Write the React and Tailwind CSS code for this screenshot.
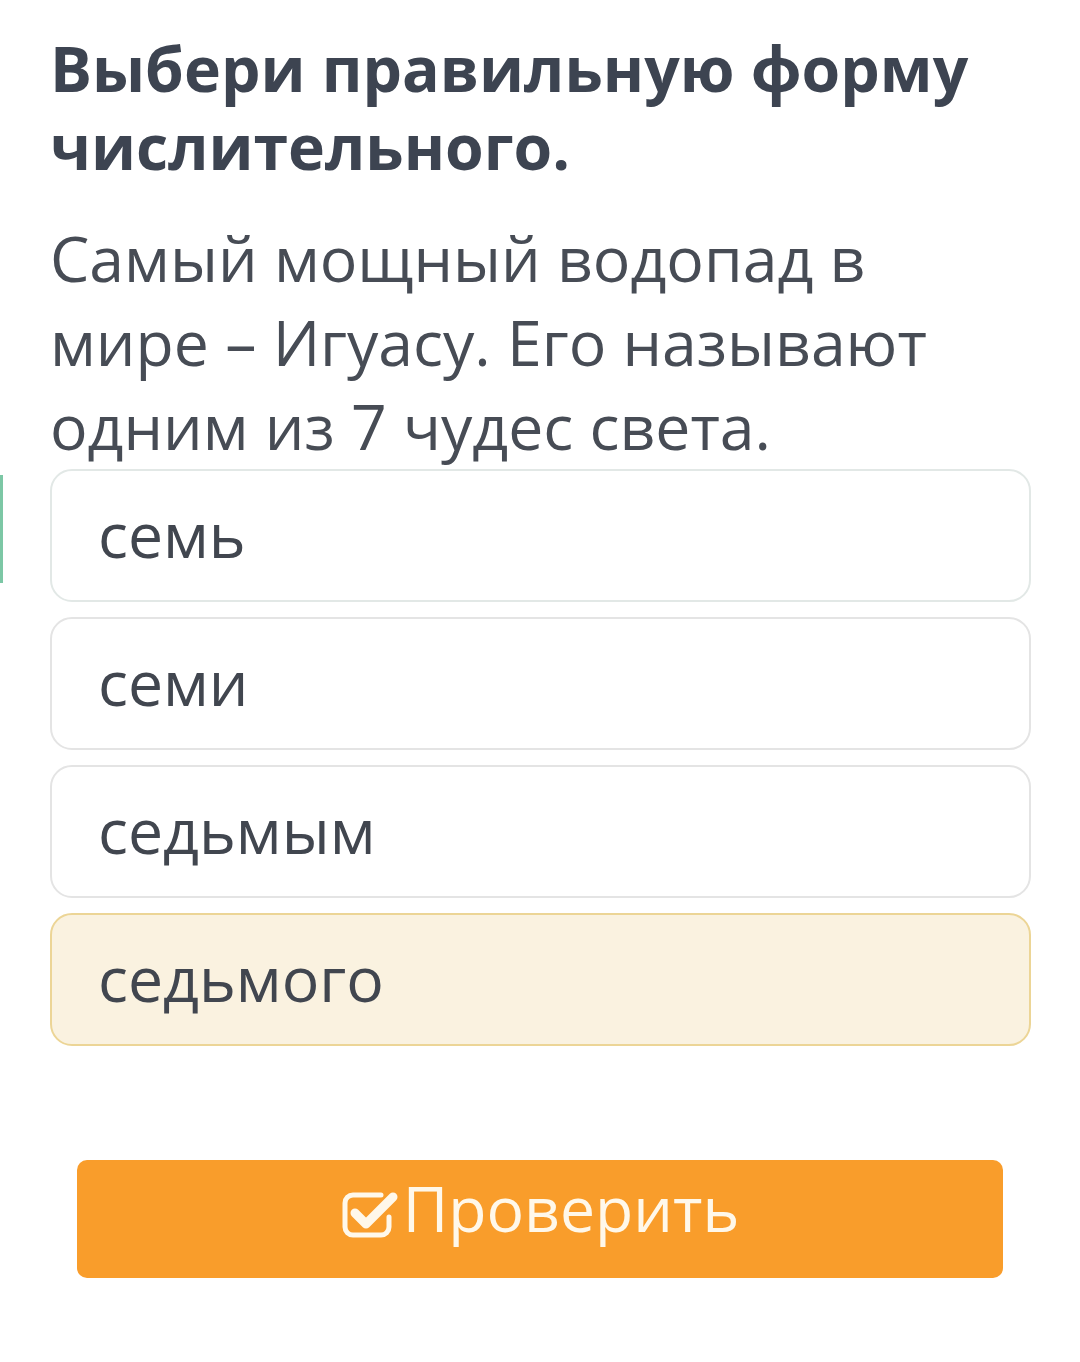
import { useState } from 'react';

const options = ['семь', 'семи', 'седьмым', 'седьмого'];

const CheckIcon = () => (
  <svg width="58" height="52" viewBox="0 0 58 52" fill="none" className="mr-[4px] shrink-0">
    <path
      d="M40 6 H12 a8 8 0 0 0 -8 8 V38 a8 8 0 0 0 8 8 H40 a8 8 0 0 0 8 -8 V28"
      stroke="#fff8ea"
      strokeWidth="5"
      strokeLinecap="round"
    />
    <path d="M14 24 L25 35 L52 8" stroke="#fff8ea" strokeWidth="9" strokeLinecap="round" strokeLinejoin="round" />
  </svg>
);

export default function App() {
  const [selected, setSelected] = useState(3);

  return (
    <div
      className="relative min-h-[1362px] w-[1080px] bg-white"
      style={{ fontFamily: '"Open Sans", "Noto Sans", sans-serif' }}
    >
      <div className="absolute left-0 top-[475px] h-[108px] w-[3px] bg-[#7cc7a5]" />

      <div className="px-[50px] pt-[29px]">
        <h1 className="text-[62.5px] font-bold leading-[78px] text-[#3d4451]">
          Выбери правильную форму числительного.
        </h1>
        <p className="mt-[31px] text-[62.5px] leading-[84px] text-[#474c55]">
          Самый мощный водопад в<br />
          мире – Игуасу. Его называют<br />
          одним из 7 чудес света.
        </p>

        <div className="mt-[1px] flex flex-col gap-[15px]">
          {options.map((opt, i) => (
            <button
              key={opt}
              onClick={() => setSelected(i)}
              className={
                'flex h-[133px] w-[981px] items-center rounded-[22px] border-2 pb-[4px] pl-[46px] text-left text-[62.5px] text-[#41464f] ' +
                (selected === i
                  ? 'border-[#ecd596] bg-[#faf2e0]'
                  : i === 0
                  ? 'border-[#e2e8e6] bg-white'
                  : 'border-[#e4e4e4] bg-white')
              }
            >
              {opt}
            </button>
          ))}
        </div>

        <div className="mt-[114px] px-[27px]">
          <button className="flex h-[118px] w-full items-center justify-center rounded-[10px] bg-[#f99d2b] pb-[22px] text-[62.5px] text-[#fff8ea]">
            <span className="mt-[14px]">
              <CheckIcon />
            </span>
            <span>Проверить</span>
          </button>
        </div>
      </div>
    </div>
  );
}
